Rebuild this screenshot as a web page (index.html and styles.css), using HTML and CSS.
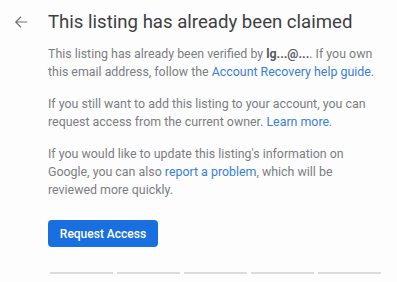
FILE: index.html
```html
<!DOCTYPE html>
<html lang="en">
<head>
    <meta charset="UTF-8">
    <meta name="viewport" content="width=device-width, initial-scale=1.0">
    <title>Listing already claimed</title>
    <link rel="stylesheet" href="styles.css">
</head>
<body>
    <div class="header">
        <svg class="back-arrow" width="14" height="14" viewBox="0 0 16 16">
            <path d="M15 8H2M8 2L2 8l6 6" fill="none" stroke="#6f7378" stroke-width="1.4"/>
        </svg>
        <h1 class="title">This listing has already been claimed</h1>
    </div>

    <div class="content">
        <p>This listing has already been verified by <b>lg...@...</b>. If you own this email address, follow the <a href="#">Account Recovery help guide</a>.</p>
        <p>If you still want to add this listing to your account, you can request access from the current owner. <a href="#">Learn more</a>.</p>
        <p>If you would like to update this listing's information on Google, you can also <a href="#">report a problem</a>, which will be reviewed more quickly.</p>

        <button class="request-button">Request Access</button>

        <div class="progress">
            <span></span>
            <span></span>
            <span></span>
            <span></span>
            <span></span>
        </div>
    </div>
</body>
</html>
```

FILE: styles.css
```css
body {
    margin: 0;
    background-color: #fdfdfd;
    font-family: Roboto, "Liberation Sans", sans-serif;
    color: #7a7e83;
}

.header {
    display: flex;
    align-items: center;
    padding: 8px 0 0 14px;
    height: 28px;
}

.back-arrow {
    width: 14px;
    margin-right: 20px;
}

.title {
    margin: 0;
    font-size: 18.6px;
    font-weight: 400;
    color: #3c4043;
}

.content {
    padding: 9px 0 0 48px;
    width: 335px;
}

.content p {
    margin: 0 0 14px 0;
    font-size: 12.4px;
    line-height: 18px;
}

.content b {
    color: #55595e;
}

.content a {
    color: #3a7fd8;
    text-decoration: none;
}

.request-button {
    display: block;
    margin-top: 21px;
    width: 110px;
    height: 27px;
    border: none;
    border-radius: 4px;
    background-color: #1a6fe0;
    color: #ffffff;
    font-family: Roboto, "Liberation Sans", sans-serif;
    font-size: 12px;
    font-weight: 500;
}

.progress {
    display: flex;
    gap: 4px;
    margin: 25px 0 0 2px;
}

.progress span {
    flex-shrink: 0;
    width: 63px;
    height: 2px;
    background-color: #dcdcdc;
}
```
